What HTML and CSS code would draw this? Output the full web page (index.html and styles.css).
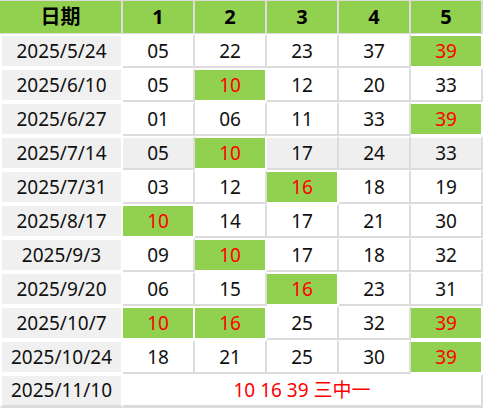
FILE: index.html
```html
<!DOCTYPE html>
<html>
<head>
<meta charset="utf-8">
<link rel="stylesheet" href="styles.css">
</head>
<body>
<table class="grid">
  <colgroup>
    <col class="c-date"><col class="c-num"><col class="c-num"><col class="c-num"><col class="c-num"><col class="c-num">
  </colgroup>
  <thead>
    <tr><th>日期</th><th>1</th><th>2</th><th>3</th><th>4</th><th>5</th></tr>
  </thead>
  <tbody>
    <tr><td class="date">2025/5/24</td><td>05</td><td>22</td><td>23</td><td>37</td><td class="hit">39</td></tr>
    <tr><td class="date">2025/6/10</td><td>05</td><td class="hit">10</td><td>12</td><td>20</td><td>33</td></tr>
    <tr><td class="date">2025/6/27</td><td>01</td><td>06</td><td>11</td><td>33</td><td class="hit">39</td></tr>
    <tr class="shade"><td class="date">2025/7/14</td><td>05</td><td class="hit">10</td><td>17</td><td>24</td><td>33</td></tr>
    <tr><td class="date">2025/7/31</td><td>03</td><td>12</td><td class="hit">16</td><td>18</td><td>19</td></tr>
    <tr><td class="date">2025/8/17</td><td class="hit">10</td><td>14</td><td>17</td><td>21</td><td>30</td></tr>
    <tr><td class="date">2025/9/3</td><td>09</td><td class="hit">10</td><td>17</td><td>18</td><td>32</td></tr>
    <tr><td class="date">2025/9/20</td><td>06</td><td>15</td><td class="hit">16</td><td>23</td><td>31</td></tr>
    <tr><td class="date">2025/10/7</td><td class="hit">10</td><td class="hit">16</td><td>25</td><td>32</td><td class="hit">39</td></tr>
    <tr><td class="date">2025/10/24</td><td>18</td><td>21</td><td>25</td><td>30</td><td class="hit">39</td></tr>
    <tr class="last"><td class="date">2025/11/10</td><td class="summary" colspan="5">10 16 39 三中一</td></tr>
  </tbody>
</table>
</body>
</html>
```

FILE: styles.css
```css
html, body {
  margin: 0;
  padding: 0;
  background: #ffffff;
}

.grid {
  border-collapse: separate;
  border-spacing: 0;
  table-layout: fixed;
  width: 483px;
  font-family: "Noto Sans", "Noto Sans CJK SC", sans-serif;
  font-size: 19px;
  color: #111111;
}

.c-date { width: 123px; }
.c-num { width: 72px; }

.grid th,
.grid td {
  box-sizing: border-box;
  height: 34px;
  padding: 0;
  text-align: center;
  vertical-align: middle;
  border-right: 2px solid #dcdcdc;
  border-bottom: 2px solid #dcdcdc;
  line-height: 1;
}

.grid th {
  background: #92d050;
  color: #000;
  font-weight: bold;
  font-size: 20px;
  border-top: 1px solid #dcdcdc;
  border-bottom-width: 1px;
}

.grid td {
  border-top: 2px solid #ffffff;
  background: #ffffff;
}

.grid td.date {
  background: #f0f0f0;
  border-right-color: #ffffff;
  border-bottom-color: #ffffff;
  border-left: 2px solid #ffffff;
}

.grid tr.shade td {
  background: #efefef;
}

.grid td.hit,
.grid tr.shade td.hit {
  background: #92d050;
  color: #ff0000;
  border-right-color: #ffffff;
  border-bottom-color: #ffffff;
}

.grid tr.last td {
  border-bottom: 3px solid #dcdcdc;
}

.grid td.summary {
  color: #ff0000;
  border-right: 2px solid #dcdcdc;
}
```
